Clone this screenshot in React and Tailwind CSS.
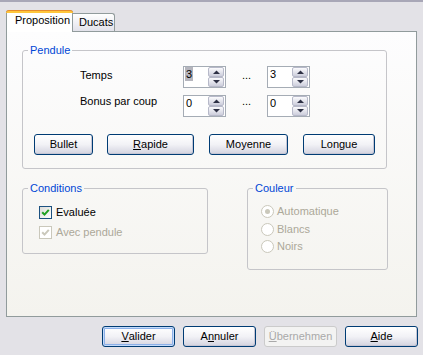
import React from "react";

const font = "font-['Liberation_Sans',Arial,sans-serif]";

function SpinArrow({ up }) {
    return (
        <div className="flex h-[10px] w-[16px] items-center justify-center rounded-[2px] border border-[#b7b9c9] bg-gradient-to-b from-[#fbfbfd] to-[#cdcedc]">
            <svg width="7" height="4" viewBox="0 0 7 4">
                <path d={up ? "M0 4 L3.5 0.5 L7 4 Z" : "M0 0 L3.5 3.5 L7 0 Z"} fill="#2e3145" />
            </svg>
        </div>
    );
}

function Spin({ value, selected }) {
    return (
        <div className="flex h-[22px] w-[43px] items-start justify-between border border-[#a5acb5] bg-white pl-px pr-px">
            <span className={selected ? "bg-[#b5b5bd] px-px leading-[14px]" : "px-px leading-[14px]"}>
                {value}
            </span>
            <div className="flex flex-col">
                <SpinArrow up />
                <SpinArrow />
            </div>
        </div>
    );
}

function Button({ children, className, isDefault, disabled }) {
    let look = "border-[#003c74] bg-gradient-to-b from-white via-[#f2f2f6] to-[#d3d3df] text-black shadow-[inset_-1px_-1px_0_#c6c6d4]";
    if (isDefault) {
        look = "border-[#003c74] bg-gradient-to-b from-white via-[#f2f2f6] to-[#d3d3df] text-black shadow-[inset_0_0_0_1px_#c4dbfa,inset_0_0_0_2px_#8cb0e8]";
    }
    if (disabled) {
        look = "border-[#cbcbcb] bg-[#f3f3f2] text-[#a9a9a9]";
    }
    return (
        <div className={`flex items-center justify-center rounded-[3px] border leading-[13px] ${look} ${className}`}>
            {children}
        </div>
    );
}

function Check({ disabled }) {
    return (
        <span
            className={
                disabled
                    ? "flex h-[13px] w-[13px] items-center justify-center border border-[#cac8bb] bg-white"
                    : "flex h-[13px] w-[13px] items-center justify-center border border-[#1c5180] bg-gradient-to-br from-[#dcdcd7] to-white"
            }
        >
            <svg width="9" height="9" viewBox="0 0 9 9">
                <path
                    d="M1.2 4.2 L3.5 6.6 L7.8 1.8"
                    stroke={disabled ? "#cac8bb" : "#21a121"}
                    strokeWidth="2"
                    fill="none"
                />
            </svg>
        </span>
    );
}

function Radio({ checked }) {
    return (
        <span className="flex h-[13px] w-[13px] items-center justify-center rounded-full border border-[#cac8bb] bg-white">
            {checked && <span className="h-[5px] w-[5px] rounded-full bg-[#cac8bb]" />}
        </span>
    );
}

export default function App() {
    return (
        <div className={`${font} h-[355px] w-[423px] overflow-hidden border-t-2 border-[#a8a7b7] bg-[#e3e2e7] text-[11px] text-black`}>
            {/* tabs */}
            <div className="mt-[8px] flex h-[21px] items-end pl-[6px]">
                <div className="relative z-10 -mb-px flex h-[22px] w-[67px] flex-col rounded-t-[3px] border-x border-[#919b9c] bg-white">
                    <div className="-mx-px h-[3px] rounded-t-[3px] border-t border-[#e68b2c] bg-[#ffc73c]" />
                    <span className="pl-[8px] pt-px leading-[13px]">Proposition</span>
                </div>
                <div className="h-[18px] w-[42px] rounded-tr-[3px] border-r border-t border-[#919b9c] bg-gradient-to-b from-white to-[#e2e2ea] pl-[6px] pt-[2px] leading-[13px]">
                    Ducats
                </div>
            </div>

            {/* panel */}
            <div className="ml-[6px] h-[286px] w-[411px] border border-[#919b9c] bg-gradient-to-b from-[#fdfdfe] to-[#f4f3ee]">
                <fieldset className="ml-[15px] mt-[12px] h-[125px] w-[365px] rounded-[3px] border border-[#c5c5c9]">
                    <legend className="ml-[5px] px-[2px] leading-[13px] text-[#0046d5]">Pendule</legend>

                    <div className="mt-[9px] flex h-[22px] items-start pl-[57px]">
                        <span className="w-[103px] pt-[3px] leading-[13px]">Temps</span>
                        <Spin value="3" selected />
                        <span className="w-[41px] pt-[3px] text-center leading-[13px]">...</span>
                        <Spin value="3" />
                    </div>
                    <div className="mt-[7px] flex h-[22px] items-start pl-[57px]">
                        <span className="w-[103px] leading-[13px]">Bonus par coup</span>
                        <Spin value="0" />
                        <span className="w-[41px] text-center leading-[13px]">...</span>
                        <Spin value="0" />
                    </div>

                    <div className="mt-[17px] flex">
                        <Button className="ml-[11px] h-[21px] w-[59px]">Bullet</Button>
                        <Button className="ml-[14px] h-[21px] w-[87px]">
                            <span className="underline">R</span>apide
                        </Button>
                        <Button className="ml-[15px] h-[21px] w-[79px]">Moyenne</Button>
                        <Button className="ml-[15px] h-[21px] w-[72px]">Longue</Button>
                    </div>
                </fieldset>

                <div className="mt-[13px] flex items-start">
                    <fieldset className="ml-[15px] h-[72px] w-[186px] rounded-[3px] border border-[#c5c5c9]">
                        <legend className="ml-[5px] px-[2px] leading-[13px] text-[#0046d5]">Conditions</legend>
                        <div className="mt-[11px] flex items-center gap-[4px] pl-[16px] leading-[13px]">
                            <Check />
                            <span>Evaluée</span>
                        </div>
                        <div className="mt-[7px] flex items-center gap-[4px] pl-[16px] leading-[13px] text-[#aca899]">
                            <Check disabled />
                            <span>Avec pendule</span>
                        </div>
                    </fieldset>

                    <fieldset className="ml-[39px] h-[88px] w-[141px] rounded-[3px] border border-[#c5c5c9]">
                        <legend className="ml-[5px] px-[2px] leading-[13px] text-[#0046d5]">Couleur</legend>
                        <div className="mt-[10px] flex flex-col pl-[13px] leading-[13px] text-[#aca899]">
                            <div className="flex items-center gap-[3px]">
                                <Radio checked />
                                <span>Automatique</span>
                            </div>
                            <div className="mt-[5px] flex items-center gap-[3px]">
                                <Radio />
                                <span>Blancs</span>
                            </div>
                            <div className="mt-[4px] flex items-center gap-[3px]">
                                <Radio />
                                <span>Noirs</span>
                            </div>
                        </div>
                    </fieldset>
                </div>
            </div>

            {/* dialog buttons */}
            <div className="mt-[9px] flex justify-end gap-[8px] pr-[5px]">
                <Button isDefault className="h-[21px] w-[73px]">
                    <span className="underline">V</span>alider
                </Button>
                <Button className="h-[21px] w-[73px]">
                    A<span className="underline">n</span>nuler
                </Button>
                <Button disabled className="h-[21px] w-[73px]">
                    <span className="underline">Ü</span>bernehmen
                </Button>
                <Button className="h-[21px] w-[73px]">
                    <span className="underline">A</span>ide
                </Button>
            </div>
        </div>
    );
}
